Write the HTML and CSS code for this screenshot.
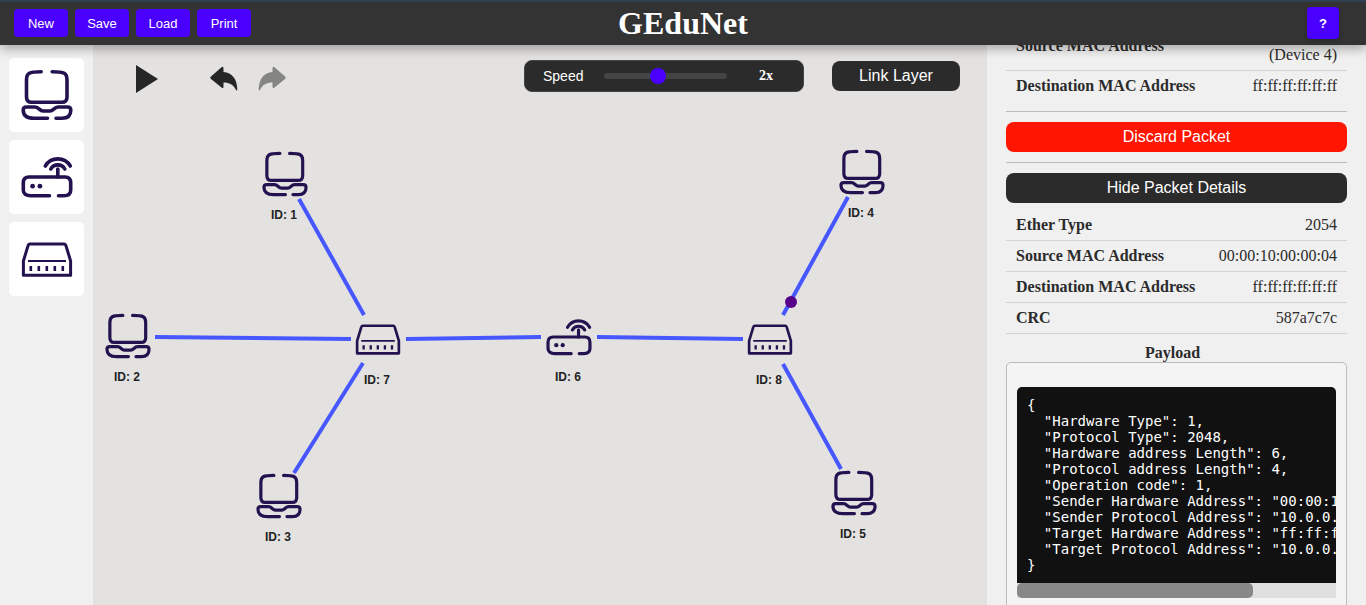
FILE: index.html
```html
<!DOCTYPE html>
<html lang="en">
<head>
<meta charset="utf-8">
<title>GEduNet</title>
<link rel="stylesheet" href="styles.css">
</head>
<body>
<svg class="sprite" aria-hidden="true">
  <symbol id="host" viewBox="0 0 52 52">
    <path d="M20.200 2.700C8 2.700 5.500 4 5.500 11V28Q5.500 33.300 10.500 33.300H41Q46 33.300 46 28V11C46 4 43.500 2.700 31.200 2.700"/>
    <path d="M26.500 49.300H13C5.500 49.300 2.200 46.500 2.200 41Q2.200 38 5.500 38H14C18 38 18.500 42 22 42H29C32.500 42 33 38 37 38H46.500Q49.800 38 49.800 41C49.800 46.500 46.500 49.300 41 49.300H35"/>
  </symbol>
  <symbol id="router" viewBox="0 0 52 52">
    <path d="M28.500 44.700H10Q2.300 44.700 2.300 39V32Q2.300 26 8 26H44Q49.700 26 49.700 32V39Q49.700 44.700 43 44.700H37.500"/>
    <path d="M36.800 26V18M29.800 18A8 8 0 0 1 43.800 18M24.300 15A14.500 14.500 0 0 1 49.300 15"/>
    <circle class="dot" cx="11.600" cy="35.200" r="2.400"/><circle class="dot" cx="18.900" cy="35.200" r="2.400"/>
  </symbol>
  <symbol id="switch" viewBox="0 0 52 52">
    <path class="box" d="M8.800 11H43.200Q44.500 11 44.900 12.500L49.600 28V42.200H2.400V28L7.100 12.500Q7.500 11 8.800 11Z"/>
    <path class="thin" d="M7 28H45"/>
    <path class="ports" d="M9.800 33V38M17.800 33V38M25.800 33V38M33.800 33V38M41.800 33V38"/>
  </symbol>
</svg>

<header class="topbar">
  <nav class="menu">
    <button class="menu-btn" type="button">New</button>
    <button class="menu-btn" type="button">Save</button>
    <button class="menu-btn" type="button">Load</button>
    <button class="menu-btn" type="button">Print</button>
  </nav>
  <h1 class="brand">GEduNet</h1>
  <button class="help-btn" type="button">?</button>
</header>

<div class="workspace">
  <aside class="palette">
    <button class="device" type="button" aria-label="Add host"><svg class="icon"><use href="#host"/></svg></button>
    <button class="device" type="button" aria-label="Add router"><svg class="icon"><use href="#router"/></svg></button>
    <button class="device" type="button" aria-label="Add switch"><svg class="icon"><use href="#switch"/></svg></button>
  </aside>

  <main class="canvas">
    <div class="toolbar">
      <div class="playback">
        <button class="tool" type="button" aria-label="Play"><svg width="22" height="28" viewBox="0 0 22 28"><path d="M0 0L22 14L0 28Z"/></svg></button>
        <div class="history">
          <button class="tool" type="button" aria-label="Undo"><svg width="28" height="26" viewBox="0 0 28 26"><path d="M1 10.500L11.500 1.300Q13.500 0 13.500 2.500V6C22 6.500 27 13 27.300 23Q27.300 26 25.800 23.500C23 18.500 19.500 16.500 13.500 16.500V20.500Q13.500 23 11.500 21.500L1 13Q-.5 11.800 1 10.500Z"/></svg></button>
          <button class="tool redo" type="button" aria-label="Redo" disabled><svg width="28" height="26" viewBox="0 0 28 26"><path d="M27 10.500L16.500 1.300Q14.500 0 14.500 2.500V6C6 6.500 1 13 .7 23Q.7 26 2.200 23.500C5 18.500 8.500 16.500 14.500 16.500V20.500Q14.500 23 16.500 21.500L27 13Q28.500 11.800 27 10.500Z"/></svg></button>
        </div>
      </div>
      <div class="speed">
        <label for="speed">Speed</label>
        <input id="speed" class="slider" type="range" min="0" max="7" value="3">
        <output class="rate" for="speed">2x</output>
      </div>
      <button class="btn layer" type="button">Link Layer</button>
    </div>
    <svg class="network" role="img" aria-label="Network diagram">
      <g class="links">
        <path d="M206 154L271 270M62 292L258 294M270 318L201 428M313 294L448 292M504 292L650 294M755 152L690 270M690 319L748 424"/>
      </g>
      <circle class="packet" cx="698" cy="257" r="6"/>
      <use href="#host" x="169" y="106" width="46" height="46"/><text x="191" y="174">ID: 1</text>
      <use href="#host" x="12" y="268" width="46" height="46"/><text x="34" y="336">ID: 2</text>
      <use href="#host" x="163" y="428" width="46" height="46"/><text x="185" y="496">ID: 3</text>
      <use href="#host" x="746" y="104" width="46" height="46"/><text x="768" y="172">ID: 4</text>
      <use href="#host" x="738" y="425" width="46" height="46"/><text x="760" y="493">ID: 5</text>
      <use href="#router" x="453" y="269" width="46" height="46"/><text x="475" y="336">ID: 6</text>
      <use href="#switch" x="262" y="271" width="46" height="46"/><text x="284" y="339">ID: 7</text>
      <use href="#switch" x="654" y="271" width="46" height="46"/><text x="676" y="339">ID: 8</text>
    </svg>
  </main>

  <aside class="inspector">
    <div class="inspector-body">
      <table class="facts">
        <tr><th scope="row">Source MAC Address</th><td>00:00:10:00:00:04<br>(Device 4)</td></tr>
        <tr class="last"><th scope="row">Destination MAC Address</th><td>ff:ff:ff:ff:ff:ff</td></tr>
      </table>
      <hr class="rule">
      <button class="btn danger" type="button">Discard Packet</button>
      <hr class="rule">
      <button class="btn" type="button">Hide Packet Details</button>
      <table class="facts details">
        <tr><th scope="row">Ether Type</th><td>2054</td></tr>
        <tr><th scope="row">Source MAC Address</th><td>00:00:10:00:00:04</td></tr>
        <tr><th scope="row">Destination MAC Address</th><td>ff:ff:ff:ff:ff:ff</td></tr>
        <tr><th scope="row">CRC</th><td>587a7c7c</td></tr>
      </table>
      <h2 class="payload-title">Payload</h2>
      <div class="payload">
<pre class="code">{
  "Hardware Type": 1,
  "Protocol Type": 2048,
  "Hardware address Length": 6,
  "Protocol address Length": 4,
  "Operation code": 1,
  "Sender Hardware Address": "00:00:10:00:00:04",
  "Sender Protocol Address": "10.0.0.4",
  "Target Hardware Address": "ff:ff:ff:ff:ff:ff",
  "Target Protocol Address": "10.0.0.1"
}</pre>
        <div class="scrollbar"><div class="thumb"></div></div>
      </div>
    </div>
  </aside>
</div>
</body>
</html>
```

FILE: styles.css
```css
* { box-sizing: border-box; }

body {
  margin: 0;
  height: 100vh;
  display: flex;
  flex-direction: column;
  overflow: hidden;
  background: #f0f0f0;
  color: #2b2b2b;
  font: 16px/18px "Liberation Serif", serif;
}

button { font-family: "Liberation Sans", sans-serif; border: 0; cursor: pointer; }

.sprite { position: absolute; width: 0; height: 0; }

symbol path {
  fill: none;
  stroke: #23124f;
  stroke-width: 3.6;
  stroke-linecap: round;
  stroke-linejoin: round;
}
symbol .box { stroke-width: 3; }
symbol .thin { stroke-width: 2; stroke-linecap: butt; }
symbol .ports { stroke-width: 2.6; stroke-linecap: butt; }
symbol .dot { fill: #23124f; }

.topbar {
  position: relative;
  z-index: 1;
  display: grid;
  grid-template-columns: 1fr auto 1fr;
  align-items: center;
  padding: 5px 27px 6px 14px;
  border-top: 2px solid #2e3f50;
  background: #333;
  box-shadow: 0 4px 10px rgba(0, 0, 0, .3);
}
.menu { display: flex; gap: 7px; }
.menu-btn {
  min-width: 54px;
  height: 28px;
  padding: 0 12px;
  border-radius: 4px;
  background: #4a00ff;
  color: #fff;
  font-size: 13px;
}
.brand {
  margin: 0 0 0 13px;
  color: #fff;
  font-size: 32px;
  line-height: 32px;
}
.help-btn {
  justify-self: end;
  width: 32px;
  height: 32px;
  padding: 0;
  border-radius: 4px;
  background: #4a00ff;
  color: #fff;
  font-size: 13px;
  font-weight: bold;
  box-shadow: 0 2px 5px rgba(0, 0, 0, .2);
}

.workspace {
  flex: 1;
  min-height: 0;
  display: grid;
  grid-template-columns: 93px 1fr 379px;
}

.palette {
  display: flex;
  flex-direction: column;
  gap: 8px;
  padding: 13px 9px;
}
.device {
  display: flex;
  align-items: center;
  justify-content: center;
  height: 74px;
  padding: 0;
  border-radius: 5px;
  background: #fff;
}
.icon { width: 52px; height: 52px; }

.canvas {
  position: relative;
  min-width: 0;
  background: #e3e2e0;
}
.toolbar {
  position: relative;
  z-index: 1;
  display: flex;
  align-items: flex-start;
  padding: 15px 27px 0 43px;
}
.playback { display: flex; align-items: center; padding-top: 5px; }
.tool { display: flex; padding: 0; background: none; }
.tool path { fill: #262626; }
.redo path { fill: #858583; }
.history { display: flex; gap: 20px; margin-left: 52px; }
.speed {
  display: flex;
  align-items: center;
  width: 280px;
  height: 32px;
  margin: 0 28px 0 auto;
  padding: 0 30px 0 18px;
  border: 1px solid #444;
  border-radius: 8px;
  background: #2b2b2b;
  color: #fff;
}
.speed label { font: 14px/18px "Liberation Sans", sans-serif; }
.slider {
  appearance: none;
  width: 123px;
  height: 6px;
  margin: 0 0 0 21px;
  border-radius: 3px;
  background: #444;
}
.slider::-webkit-slider-thumb {
  appearance: none;
  width: 16px;
  height: 16px;
  border-radius: 50%;
  background: #4a00ff;
}
.rate { margin-left: auto; font-size: 14px; font-weight: bold; }

.btn {
  height: 30px;
  padding: 0 16px;
  border-radius: 8px;
  background: #2b2b2b;
  color: #fff;
  font-size: 16px;
}
.layer { width: 128px; margin-top: 1px; }

.network {
  position: absolute;
  inset: 0;
  width: 100%;
  height: 100%;
}
.links { fill: none; stroke: #4757ff; stroke-width: 4; }
.packet { fill: #58008a; }
.network text {
  fill: #222;
  font: bold 12px "Liberation Sans", sans-serif;
  text-anchor: middle;
}

.inspector { padding: 0 19px; overflow: hidden; }
.inspector-body { display: flex; flex-direction: column; margin-top: -23px; }
.facts { width: 100%; border-collapse: separate; border-spacing: 0; }
.facts th, .facts td {
  padding: 6px 10px;
  border-bottom: 1px solid #d3d3d3;
  white-space: nowrap;
}
.facts th { text-align: left; }
.facts td { text-align: right; }
.facts .last > * { border-bottom: 0; }
.rule {
  width: 100%;
  margin: 10px 0;
  border: 0;
  border-top: 1px solid #bbb;
}
.danger { background: #ff1500; }
.details { margin-top: 7px; }
.payload-title {
  margin: 10px 8px 0 0;
  font-size: 16px;
  line-height: 18px;
  text-align: center;
}
.payload {
  padding: 24px 10px;
  border: 1px solid #bbb;
  border-radius: 5px;
  background: #f4f4f4;
}
.code {
  margin: 0;
  padding: 10px;
  border-radius: 5px 5px 0 0;
  background: #111;
  color: #fff;
  font: 14px/16px "DejaVu Sans Mono", monospace;
  overflow: hidden;
}
.scrollbar { height: 15px; background: #e0e0e0; }
.thumb { width: 74%; height: 100%; border-radius: 5px; background: #888; }
```
